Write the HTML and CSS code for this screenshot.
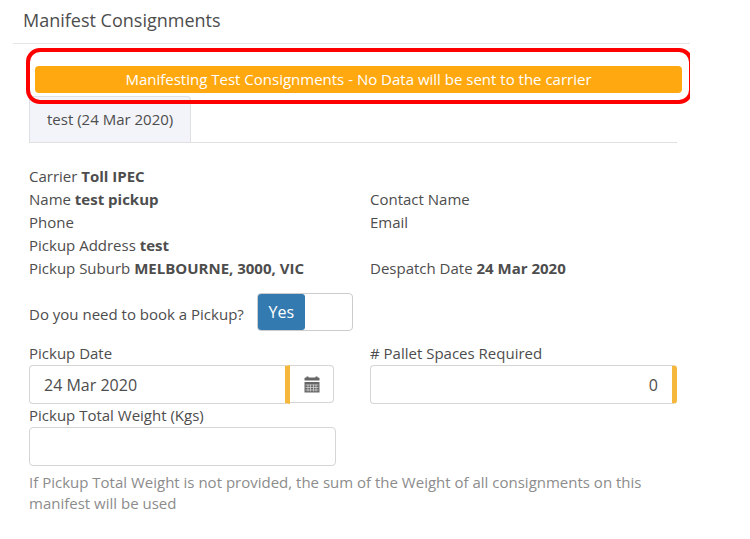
FILE: index.html
```html
<!DOCTYPE html>
<html lang="en">
<head>
<meta charset="utf-8">
<meta name="viewport" content="width=device-width, initial-scale=1">
<title>Manifest Consignments</title>
<link rel="stylesheet" href="styles.css">
</head>
<body>
<main class="dialog">
  <header class="dialog-header">
    <h1 class="dialog-title">Manifest Consignments</h1>
  </header>
  <div class="callout">
    <p class="banner">Manifesting Test Consignments - No Data will be sent to the carrier</p>
  </div>
  <div class="dialog-body">
    <nav class="tabs">
      <a class="tab" href="#consignment">test (24 Mar 2020)</a>
    </nav>
    <form id="consignment">
      <div class="details">
        <div>Carrier <strong>Toll IPEC</strong></div>
        <div></div>
        <div>Name <strong>test pickup</strong></div>
        <div>Contact Name</div>
        <div>Phone</div>
        <div>Email</div>
        <div>Pickup Address <strong>test</strong></div>
        <div></div>
        <div>Pickup Suburb <strong>MELBOURNE, 3000, VIC</strong></div>
        <div>Despatch Date <strong>24 Mar 2020</strong></div>
      </div>
      <div class="booking">
        <label class="booking-label" for="book">Do you need to book a Pickup?</label>
        <span class="switch">
          <input class="switch-input" type="checkbox" id="book" checked>
          <span class="switch-handle">Yes</span>
        </span>
      </div>
      <div class="fields">
        <div class="field">
          <label for="date">Pickup Date</label>
          <div class="date-group">
            <input class="control required" id="date" type="text" value="24 Mar 2020">
            <button class="date-button" type="button" aria-label="Choose date">
              <svg width="16" height="17" viewBox="0 0 16 17" fill="#666">
                <path d="M.5 4.500V2.500Q.5 1.500 1.500 1.500H2.500V.5h2v1h7v-1h2v1h1q1 0 1 1v2z"/>
                <path d="M.5 6h15v10.500H.5z"/>
                <path d="M1.500 9h13M1.500 11.500h13M1.500 14h13M4 8.500v7M6.500 8.500v7M9.500 8.500v7M12 8.500v7" stroke="#ddd" stroke-width=".7"/>
              </svg>
            </button>
          </div>
        </div>
        <div class="field">
          <label for="pallets"># Pallet Spaces Required</label>
          <input class="control required number" id="pallets" type="text" inputmode="numeric" value="0">
        </div>
        <div class="field">
          <label for="weight">Pickup Total Weight (Kgs)</label>
          <input class="control" id="weight" type="text" aria-describedby="weight-help">
        </div>
      </div>
      <p class="help" id="weight-help">If Pickup Total Weight is not provided, the sum of the Weight of all consignments on this manifest will be used</p>
    </form>
  </div>
</main>
</body>
</html>
```
FILE: styles.css
```css
* {
  box-sizing: border-box;
}

body {
  margin: 0;
  background: #fff;
  color: #4d4d4d;
  font: 15px/23px "Open Sans", "Noto Sans", sans-serif;
}

input,
button {
  font: inherit;
  color: inherit;
}

.dialog {
  margin: 0 60px 0 13px;
  overflow: hidden;
}

.dialog-header {
  padding: 8px 10px 11px;
  border-bottom: 1px solid #e5e5e5;
}

.dialog-title {
  margin: 0;
  font-size: 18px;
  font-weight: 400;
  line-height: 24px;
}

.callout {
  position: relative;
  margin: 4px -3px 0 13px;
  padding: 14px 7px 7px 5px;
  border: 4px solid #f00;
  border-radius: 14px;
}

.banner {
  margin: 0;
  padding: 2px 0;
  border-radius: 4px;
  background: #ffa80f;
  color: #fff;
  text-align: center;
}

.dialog-body {
  padding: 0 13px 24px 16px;
}

.tabs {
  display: flex;
  margin-top: -8px;
  border-bottom: 1px solid #e0e0e0;
}

.tab {
  padding: 11px 17px;
  border: 1px solid #dfe0e3;
  border-bottom: 0;
  border-radius: 4px 4px 0 0;
  background: #f3f4f9;
  color: inherit;
  text-decoration: none;
}

.details,
.fields {
  display: grid;
  grid-template-columns: 1fr 1fr;
  column-gap: 34px;
}

.details {
  margin-top: 22px;
}

.booking {
  display: flex;
  align-items: center;
  gap: 13px;
  margin-top: 13px;
}

.booking-label {
  padding-top: 4px;
}

.switch {
  position: relative;
  display: flex;
  width: 96px;
  height: 38px;
  border: 1px solid #ccc;
  border-radius: 4px;
}

.switch-input {
  position: absolute;
  inset: 0;
  width: 100%;
  height: 100%;
  margin: 0;
  opacity: 0;
}

.switch-handle {
  width: 50%;
  border-radius: 3px;
  background: #337ab0;
  color: #fff;
  font-size: 16px;
  line-height: 36px;
  text-align: center;
}

.fields {
  margin-top: 11px;
}

.field {
  display: flex;
  flex-direction: column;
}

.control {
  width: 100%;
  height: 39px;
  padding: 0 14px;
  border: 1px solid #d5d5d5;
  border-radius: 4px;
  background: #fff;
  font-size: 16px;
}

.required {
  border-right: 5px solid #f5b83d;
}

.number {
  text-align: right;
}

.date-group {
  display: flex;
  padding-right: 2px;
}

.date-group .control {
  flex: 1;
  border-radius: 4px 0 0 4px;
}

.date-button {
  display: flex;
  align-items: center;
  justify-content: center;
  width: 44px;
  height: 38px;
  padding: 0;
  border: 1px solid #d5d5d5;
  border-left: 0;
  border-radius: 0 4px 4px 0;
  background: #fff;
}

.help {
  margin: 6px 0 0;
  color: #8c8c8c;
  line-height: 21px;
}
```
